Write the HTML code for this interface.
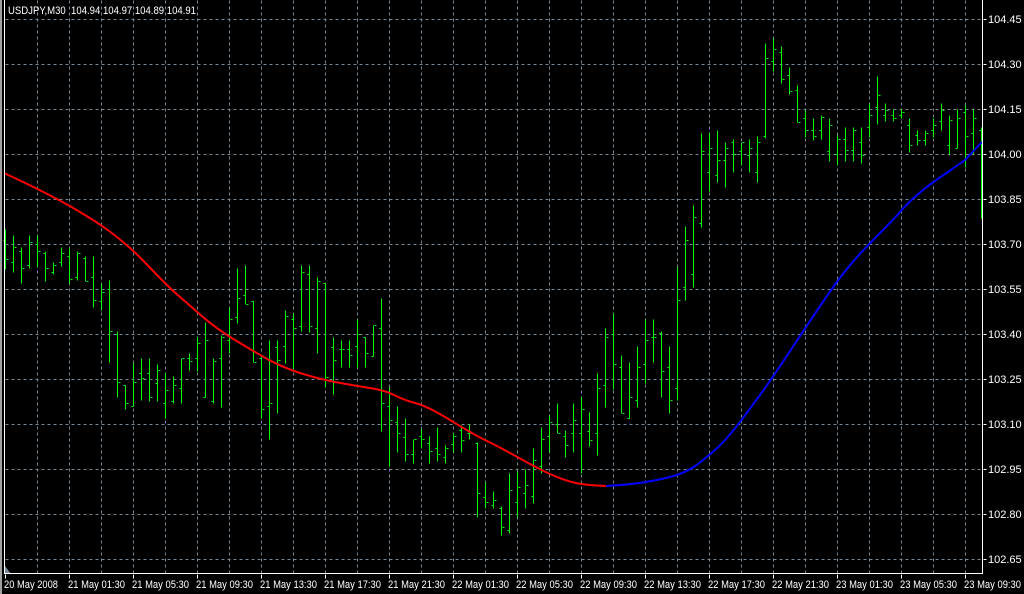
<!DOCTYPE html>
<html><head><meta charset="utf-8"><style>
html,body{margin:0;padding:0;background:#000;width:1024px;height:594px;overflow:hidden}
svg{display:block}
text{font-family:"Liberation Sans",sans-serif;font-size:11px;fill:#fff}
</style></head><body>
<svg width="1024" height="594" viewBox="0 0 1024 594" xmlns="http://www.w3.org/2000/svg">
<rect width="1024" height="594" fill="#000"/>
<rect x="0" y="0" width="2" height="594" fill="#a0a0a0"/>
<g stroke="#778899" stroke-width="1" stroke-dasharray="3 3" shape-rendering="crispEdges" transform="translate(0.5,0.5)">
<path d="M37 0V573M69 0V573M101 0V573M133 0V573M165 0V573M197 0V573M229 0V573M261 0V573M293 0V573M325 0V573M357 0V573M389 0V573M421 0V573M453 0V573M485 0V573M517 0V573M549 0V573M581 0V573M613 0V573M645 0V573M677 0V573M709 0V573M741 0V573M773 0V573M805 0V573M837 0V573M869 0V573M901 0V573M933 0V573M965 0V573"/>
<path d="M5 19H981M5 64H981M5 109H981M5 154H981M5 199H981M5 244H981M5 289H981M5 334H981M5 379H981M5 424H981M5 469H981M5 514H981M5 559H981"/>
</g>
<path d="M5 566L11 574H5Z" fill="#778899"/>
<g stroke="#00ff00" stroke-width="1" fill="none" shape-rendering="crispEdges" transform="translate(0.5,0.5)">
<path d="
M5 229V269M3 240h2M6 259h2
M13 235V272M11 262h2M14 247h2
M21 247V283M19 251h2M22 268h2
M29 235V268M27 265h2M30 242h2
M37 235V266M35 244h2M38 251h2
M45 251V281M43 253h2M46 268h2
M53 262V274M51 272h2M54 265h2
M61 247V266M59 262h2M62 253h2
M69 248V283M67 256h2M70 279h2
M77 251V280M75 277h2M78 253h2
M85 256V281M83 258h2M86 281h2
M93 256V307M91 277h2M94 300h2
M101 283V310M99 301h2M102 292h2
M109 280V362M107 289h2M110 331h2
M117 331V397M115 334h2M118 382h2
M125 385V409M123 385h2M126 403h2
M133 363V406M131 406h2M134 382h2
M141 358V400M139 373h2M142 378h2
M149 358V401M147 373h2M150 397h2
M157 364V401M155 383h2M158 370h2
M165 373V418M163 403h2M166 390h2
M173 376V403M171 401h2M174 385h2
M181 358V403M179 388h2M182 358h2
M189 353V370M187 358h2M190 361h2
M197 337V371M195 358h2M198 343h2
M205 322V397M203 397h2M206 340h2
M213 358V403M211 401h2M214 361h2
M221 335V407M219 358h2M222 337h2
M229 307V353M227 340h2M230 319h2
M237 268V323M235 317h2M238 298h2
M245 265V304M243 295h2M246 304h2
M253 301V362M251 301h2M254 362h2
M261 357V418M259 358h2M262 409h2
M269 340V439M267 406h2M270 403h2
M277 340V413M275 347h2M278 360h2
M285 310V363M283 346h2M286 316h2
M293 313V369M291 319h2M294 328h2
M301 265V331M299 326h2M302 272h2
M309 265V332M307 274h2M310 326h2
M317 277V353M315 328h2M318 281h2
M325 283V387M323 283h2M326 377h2
M333 337V394M331 347h2M334 360h2
M341 340V367M339 349h2M342 349h2
M349 340V367M347 349h2M350 355h2
M357 319V367M355 346h2M358 334h2
M365 337V367M363 337h2M366 353h2
M373 325V356M371 356h2M374 325h2
M381 298V431M379 328h2M382 403h2
M389 387V466M387 406h2M390 420h2
M397 406V452M395 422h2M398 433h2
M405 418V461M403 437h2M406 454h2
M413 439V463M411 454h2M414 439h2
M421 429V448M419 436h2M422 439h2
M429 436V463M427 443h2M430 451h2
M437 427V461M435 448h2M438 454h2
M445 445V463M443 457h2M446 448h2
M453 433V452M451 444h2M454 436h2
M461 425V452M459 430h2M462 440h2
M469 424V439M467 433h2M470 433h2
M477 442V517M475 443h2M478 493h2
M485 482V508M483 497h2M486 502h2
M493 491V508M491 505h2M494 500h2
M501 506V535M499 508h2M502 527h2
M509 473V533M507 530h2M510 490h2
M517 471V517M515 502h2M518 487h2
M525 469V508M523 493h2M526 485h2
M533 448V503M531 496h2M534 460h2
M541 427V473M539 466h2M542 439h2
M549 415V452M547 436h2M550 422h2
M557 403V433M555 424h2M558 433h2
M565 430V457M563 436h2M566 445h2
M573 403V452M571 433h2M574 420h2
M581 397V473M579 433h2M582 409h2
M589 412V446M587 431h2M590 440h2
M597 373V455M595 433h2M598 388h2
M605 328V407M603 385h2M606 337h2
M613 313V389M611 334h2M614 364h2
M621 355V413M619 367h2M622 413h2
M629 362V418M627 418h2M630 397h2
M637 346V407M635 400h2M638 367h2
M645 319V383M643 364h2M646 340h2
M653 319V362M651 337h2M654 337h2
M661 331V397M659 333h2M662 371h2
M669 346V413M667 367h2M670 400h2
M677 267V400M675 388h2M678 300h2
M685 226V300M683 287h2M686 240h2
M693 205V287M691 274h2M694 217h2
M701 133V227M699 223h2M702 151h2
M709 133V191M707 172h2M710 148h2
M717 130V182M715 175h2M718 160h2
M725 142V187M723 160h2M726 148h2
M733 139V172M731 142h2M734 154h2
M741 142V165M739 151h2M742 142h2
M749 139V172M747 155h2M750 148h2
M757 136V182M755 172h2M758 142h2
M765 43V138M763 136h2M766 58h2
M773 38V71M771 61h2M774 49h2
M781 46V83M779 52h2M782 79h2
M789 67V94M787 75h2M790 91h2
M797 85V122M795 90h2M798 122h2
M805 110V137M803 118h2M806 130h2
M813 118V140M811 130h2M814 136h2
M821 115V139M819 130h2M822 117h2
M829 118V161M827 151h2M830 125h2
M837 135V165M835 154h2M838 139h2
M845 127V161M843 139h2M846 150h2
M853 127V161M851 150h2M854 130h2
M861 127V163M859 142h2M862 155h2
M869 103V137M867 127h2M870 115h2
M877 76V124M875 107h2M878 95h2
M885 103V121M883 115h2M886 110h2
M893 109V121M891 115h2M894 118h2
M901 109V118M899 115h2M902 112h2
M909 118V152M907 125h2M910 145h2
M917 130V145M915 135h2M918 140h2
M925 130V145M923 140h2M926 133h2
M933 118V137M931 130h2M934 125h2
M941 103V130M939 121h2M942 110h2
M949 115V154M947 145h2M950 120h2
M957 109V148M955 148h2M958 118h2
M965 105V167M963 112h2M966 136h2
M973 109V154M971 133h2M974 118h2
M981 127V218M979 130h2
"/>
</g>
<path d="M4 173C30 185 55 197 80 212S115 235 130 248S160 280 180 297S210 325 235 340S275 365 300 373S345 384 370 388S395 398 415 403S460 428 485 440S530 465 550 474S580 485 606 486" stroke="#ff0000" stroke-width="2" fill="none" stroke-linejoin="round"/>
<path d="M606 486C630 485 650 482 670 477S700 463 715 450S745 415 760 395S800 335 829 293S880 235 900 212S940 178 965 160L982 142" stroke="#0000ff" stroke-width="2" fill="none" stroke-linejoin="round"/>
<g shape-rendering="crispEdges" fill="#fff">
<rect x="4" y="0" width="1" height="574"/>
<rect x="4" y="573" width="979" height="1"/>
<rect x="982" y="0" width="1" height="574"/>
</g>
<g stroke="#fff" shape-rendering="crispEdges" transform="translate(0.5,0.5)">
<path d="M983 19h3M983 64h3M983 109h3M983 154h3M983 199h3M983 244h3M983 289h3M983 334h3M983 379h3M983 424h3M983 469h3M983 514h3M983 559h3"/>
<path d="M5 574v4M69 574v4M133 574v4M197 574v4M261 574v4M325 574v4M389 574v4M453 574v4M517 574v4M581 574v4M645 574v4M709 574v4M773 574v4M837 574v4M901 574v4M965 574v4"/>
</g>
<text x="8" y="14" textLength="188" lengthAdjust="spacingAndGlyphs" xml:space="preserve">USDJPY,M30  104.94 104.97 104.89 104.91</text>
<g>
<text x="988" y="23">104.45</text>
<text x="988" y="68">104.30</text>
<text x="988" y="113">104.15</text>
<text x="988" y="158">104.00</text>
<text x="988" y="203">103.85</text>
<text x="988" y="248">103.70</text>
<text x="988" y="293">103.55</text>
<text x="988" y="338">103.40</text>
<text x="988" y="383">103.25</text>
<text x="988" y="428">103.10</text>
<text x="988" y="473">102.95</text>
<text x="988" y="518">102.80</text>
<text x="988" y="563">102.65</text>
</g>
<g lengthAdjust="spacingAndGlyphs">
<text x="4" y="588" textLength="54" lengthAdjust="spacingAndGlyphs">20 May 2008</text>
<text x="68" y="588" textLength="57" lengthAdjust="spacingAndGlyphs">21 May 01:30</text>
<text x="132" y="588" textLength="57" lengthAdjust="spacingAndGlyphs">21 May 05:30</text>
<text x="196" y="588" textLength="57" lengthAdjust="spacingAndGlyphs">21 May 09:30</text>
<text x="260" y="588" textLength="57" lengthAdjust="spacingAndGlyphs">21 May 13:30</text>
<text x="324" y="588" textLength="57" lengthAdjust="spacingAndGlyphs">21 May 17:30</text>
<text x="388" y="588" textLength="57" lengthAdjust="spacingAndGlyphs">21 May 21:30</text>
<text x="452" y="588" textLength="57" lengthAdjust="spacingAndGlyphs">22 May 01:30</text>
<text x="516" y="588" textLength="57" lengthAdjust="spacingAndGlyphs">22 May 05:30</text>
<text x="580" y="588" textLength="57" lengthAdjust="spacingAndGlyphs">22 May 09:30</text>
<text x="644" y="588" textLength="57" lengthAdjust="spacingAndGlyphs">22 May 13:30</text>
<text x="708" y="588" textLength="57" lengthAdjust="spacingAndGlyphs">22 May 17:30</text>
<text x="772" y="588" textLength="57" lengthAdjust="spacingAndGlyphs">22 May 21:30</text>
<text x="836" y="588" textLength="57" lengthAdjust="spacingAndGlyphs">23 May 01:30</text>
<text x="900" y="588" textLength="57" lengthAdjust="spacingAndGlyphs">23 May 05:30</text>
<text x="964" y="588" textLength="57" lengthAdjust="spacingAndGlyphs">23 May 09:30</text>
</g>
</svg>
</body></html>
